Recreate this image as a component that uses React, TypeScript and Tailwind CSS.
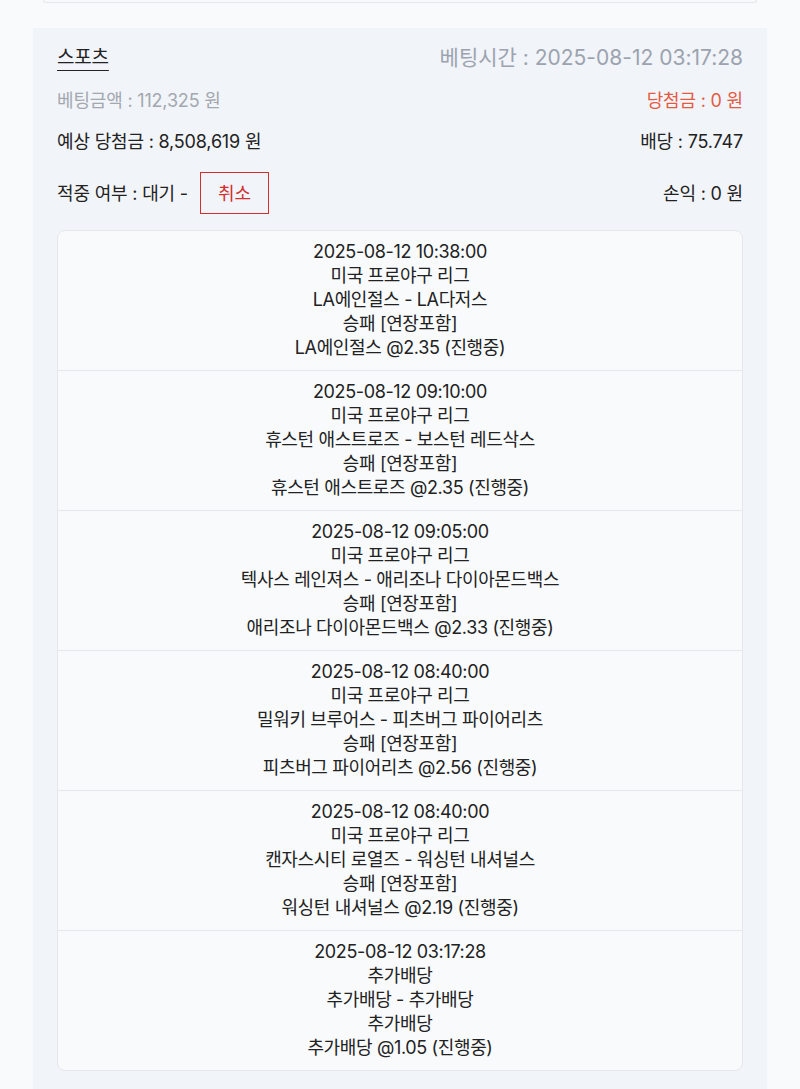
import React from "react";

type Bet = {
  time: string;
  league: string;
  match: string;
  market: string;
  pick: string;
};

const bets: Bet[] = [
  { time: "2025-08-12 10:38:00", league: "미국 프로야구 리그", match: "LA에인절스 - LA다저스", market: "승패 [연장포함]", pick: "LA에인절스 @2.35 (진행중)" },
  { time: "2025-08-12 09:10:00", league: "미국 프로야구 리그", match: "휴스턴 애스트로즈 - 보스턴 레드삭스", market: "승패 [연장포함]", pick: "휴스턴 애스트로즈 @2.35 (진행중)" },
  { time: "2025-08-12 09:05:00", league: "미국 프로야구 리그", match: "텍사스 레인져스 - 애리조나 다이아몬드백스", market: "승패 [연장포함]", pick: "애리조나 다이아몬드백스 @2.33 (진행중)" },
  { time: "2025-08-12 08:40:00", league: "미국 프로야구 리그", match: "밀워키 브루어스 - 피츠버그 파이어리츠", market: "승패 [연장포함]", pick: "피츠버그 파이어리츠 @2.56 (진행중)" },
  { time: "2025-08-12 08:40:00", league: "미국 프로야구 리그", match: "캔자스시티 로열즈 - 워싱턴 내셔널스", market: "승패 [연장포함]", pick: "워싱턴 내셔널스 @2.19 (진행중)" },
  { time: "2025-08-12 03:17:28", league: "추가배당", match: "추가배당 - 추가배당", market: "추가배당", pick: "추가배당 @1.05 (진행중)" },
];

const App = () => {
  return (
    <div
      className="min-h-screen w-full bg-[#f8fafc] text-[#222]"
      style={{ fontFamily: 'Inter, "Noto Sans CJK KR", sans-serif' }}
    >
      {/* previous card edge */}
      <div className="mx-[43px] h-[3px] border-x border-b border-[#e5e7eb] rounded-b-md bg-[#f8fafc]" />

      <div className="mx-[33px] mt-[25px] bg-[#f1f4f8] px-[24px] pt-[16px] pb-[24px]">
        {/* header */}
        <div className="flex items-center justify-between h-[28px]">
          <span className="text-[19px] tracking-[-0.01em] underline underline-offset-[6px] decoration-1">스포츠</span>
          <span className="text-[21px] text-[#9ca3af]">베팅시간 : 2025-08-12 03:17:28</span>
        </div>

        <div className="mt-[15px] flex items-center justify-between h-[26px] text-[18px] tracking-[-0.01em]">
          <span className="text-[#a3a8b0]">베팅금액 : 112,325 원</span>
          <span className="text-[#e45a43]">당첨금 : 0 원</span>
        </div>

        <div className="mt-[15px] flex items-center justify-between h-[26px] text-[18px] tracking-[-0.01em]">
          <span>예상 당첨금 : 8,508,619 원</span>
          <span>배당 : 75.747</span>
        </div>

        <div className="mt-[18px] flex items-center justify-between h-[42px] text-[18px] tracking-[-0.01em]">
          <div className="flex items-center">
            <span>적중 여부 : 대기 -</span>
            <span className="ml-[12px] w-[69px] h-[42px] flex items-center justify-center border border-[#d32f2f] text-[#d32f2f]">
              취소
            </span>
          </div>
          <span>손익 : 0 원</span>
        </div>

        {/* bet list */}
        <div className="mt-[16px] rounded-lg border border-[#e5e7eb] bg-[#f8fafc] overflow-hidden">
          {bets.map((b, i) => (
            <div
              key={i}
              className={`pt-[9px] pb-[10px] text-center text-[18px] leading-[24px] tracking-[-0.02em] ${i > 0 ? "border-t border-[#e5e7eb]" : ""}`}
            >
              <div>{b.time}</div>
              <div>{b.league}</div>
              <div>{b.match}</div>
              <div>{b.market}</div>
              <div>{b.pick}</div>
            </div>
          ))}
        </div>
      </div>
    </div>
  );
};

export default App;
